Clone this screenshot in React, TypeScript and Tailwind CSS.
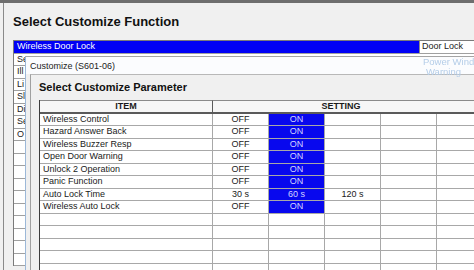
const listRows = ['Se', 'Ill', 'Li', 'Sl', 'Di', 'Se', 'O', '', '', '', '', '', '', '', '', '', '']

type Row = { item: string; values: string[]; selected: number }

const rows: Row[] = [
  { item: 'Wireless Control', values: ['OFF', 'ON'], selected: 1 },
  { item: 'Hazard Answer Back', values: ['OFF', 'ON'], selected: 1 },
  { item: 'Wireless Buzzer Resp', values: ['OFF', 'ON'], selected: 1 },
  { item: 'Open Door Warning', values: ['OFF', 'ON'], selected: 1 },
  { item: 'Unlock 2 Operation', values: ['OFF', 'ON'], selected: 1 },
  { item: 'Panic Function', values: ['OFF', 'ON'], selected: 1 },
  { item: 'Auto Lock Time', values: ['30 s', '60 s', '120 s'], selected: 1 },
  { item: 'Wireless Auto Lock', values: ['OFF', 'ON'], selected: 1 },
  { item: '', values: [], selected: -1 },
  { item: '', values: [], selected: -1 },
  { item: '', values: [], selected: -1 },
  { item: '', values: [], selected: -1 },
  { item: '', values: [], selected: -1 },
]

function SettingsTable() {
  return (
    <div className="grid w-[453px] grid-cols-[173px_56px_56px_56px_56px_56px] border-l border-[#3c3c3c] text-[9px] text-[#1a1a1a]">
      <div className="flex h-[13.5px] items-center justify-center border-t border-b-2 border-r border-[#5a5a5a] border-t-[#8a8a8a] bg-[#f6f6f6] font-bold leading-none">
        ITEM
      </div>
      <div className="col-span-5 flex h-[13.5px] items-center justify-center border-t border-b-2 border-[#5a5a5a] border-t-[#8a8a8a] bg-[#f6f6f6] pr-[24px] font-bold leading-none">
        SETTING
      </div>
      {rows.map((row, r) => (
        <div key={r} className="contents">
          <div className="flex h-[12.5px] items-center border-b border-r border-[#a8a8a8] bg-white pl-[3px] leading-none">
            {row.item}
          </div>
          {[0, 1, 2, 3, 4].map((c) => {
            const on = c === row.selected
            return (
              <div
                key={c}
                className={
                  on
                    ? 'flex h-[12.5px] items-center justify-center border-b border-r border-[#a8a8a8] bg-[#0808ee] leading-none text-[#d4d4ff]'
                    : 'flex h-[12.5px] items-center justify-center border-b border-r border-[#a8a8a8] bg-white leading-none'
                }
              >
                {row.values[c] ?? ''}
              </div>
            )
          })}
        </div>
      ))}
    </div>
  )
}

function CustomizeDialog() {
  return (
    <div className="absolute top-[56px] left-[25px] right-0 bottom-0 flex flex-col border-t border-l border-t-[#a4a4a4] border-l-[#9cb8d8] bg-[#f0f0f0]">
      <div className="relative h-[17px] shrink-0 bg-[#fbfcfe] pl-[4px] pt-[4px] text-[9px] leading-[10px] text-[#222]">
        Customize (S601-06)
        <span className="absolute top-[0px] left-[397px] text-[9.5px] whitespace-nowrap text-[#b4cde8] blur-[0.4px]">
          Power Wind
        </span>
        <span className="absolute top-[10px] left-[400px] text-[9.5px] whitespace-nowrap text-[#b4cde8] blur-[0.4px]">
          Warning
        </span>
      </div>
      <div className="ml-[4px] flex flex-1 flex-col border-t border-l border-t-[#b8b8b8] border-l-[#a0a0a0]">
        <div className="h-[25px] shrink-0 pt-[5px] pl-[8px] text-[11px] leading-[14px] font-bold text-[#111]">
          Select Customize Parameter
        </div>
        <div className="ml-[8px]">
          <SettingsTable />
        </div>
      </div>
    </div>
  )
}

export default function App() {
  return (
    <div
      className="relative h-[270px] w-[474px] overflow-hidden bg-[#f0f0f0]"
      style={{ fontFamily: '"Liberation Sans", Arial, sans-serif' }}
    >
      <div className="h-[3px] bg-[#6e6e6e]" />
      <div className="ml-[3px] h-[267px] border-l border-[#8a8a8a]">
        <div className="h-[37px] pt-[11px] pl-[9px] text-[13px] leading-[16px] font-bold text-[#111]">
          Select Customize Function
        </div>
        <div className="ml-[9px] border-l border-t border-[#7a7a7a] bg-white text-[9px]">
          <div className="flex h-[12.5px] border-b border-[#a0a0a0]">
            <div className="flex w-[405px] items-center bg-[#0000f5] pl-[3px] leading-none text-white">
              Wireless Door Lock
            </div>
            <div className="flex flex-1 items-center border-l border-[#8a8a8a] pl-[2px] leading-none text-[#222]">
              Door Lock
            </div>
          </div>
          {listRows.map((label, i) => (
            <div
              key={i}
              className="flex h-[12.5px] items-center border-b border-[#a0a0a0] pl-[3px] leading-none whitespace-nowrap text-[#222]"
            >
              {label}
            </div>
          ))}
        </div>
      </div>
      <CustomizeDialog />
    </div>
  )
}
